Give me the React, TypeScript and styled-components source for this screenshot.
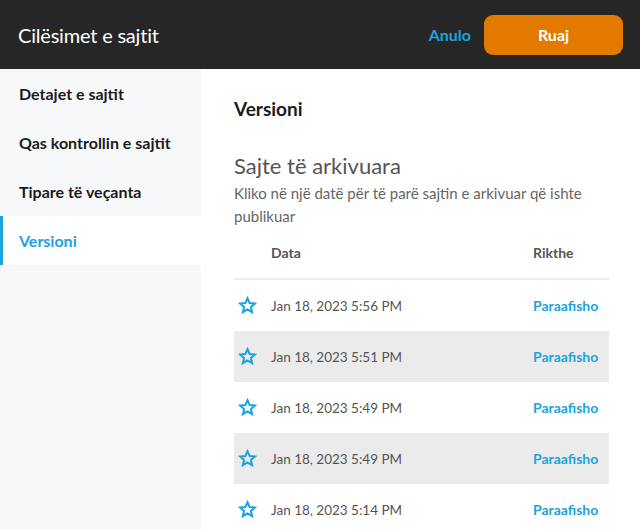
import React from 'react';
import styled, { createGlobalStyle } from 'styled-components';

const GlobalStyle = createGlobalStyle`
  html, body {
    margin: 0;
    padding: 0;
    background: #ffffff;
    font-family: Lato, "Open Sans", sans-serif;
  }
`;

const Page = styled.div`
  width: 640px;
  height: 529px;
  display: flex;
  flex-direction: column;
  overflow: hidden;
`;

const TopBar = styled.header`
  height: 69px;
  flex-shrink: 0;
  background: #262626;
  display: flex;
  align-items: center;
  padding: 0 17px 0 18px;
  box-sizing: border-box;
`;

const Title = styled.h1`
  flex: 1;
  margin: 0;
  color: #ffffff;
  font-size: 20px;
  font-weight: 400;
  letter-spacing: -0.2px;
`;

const CancelLink = styled.a`
  color: #1aa3dc;
  font-size: 16px;
  font-weight: 700;
  margin-right: 13px;
  cursor: pointer;
`;

const SaveButton = styled.button`
  width: 139px;
  height: 40px;
  border: none;
  border-radius: 9px;
  background: #e37a00;
  color: #ffffff;
  font-family: inherit;
  font-size: 16px;
  font-weight: 700;
  cursor: pointer;
`;

const Body = styled.div`
  flex: 1;
  display: flex;
  min-height: 0;
`;

const Sidebar = styled.nav`
  width: 201px;
  flex-shrink: 0;
  background: #f7f8fa;
  display: flex;
  flex-direction: column;
`;

const NavItem = styled.div<{ $active?: boolean }>`
  height: 49px;
  display: flex;
  align-items: center;
  padding-left: ${(p) => (p.$active ? '16px' : '19px')};
  border-left: ${(p) => (p.$active ? '3px solid #1aa3dc' : 'none')};
  background: ${(p) => (p.$active ? '#ffffff' : 'transparent')};
  color: ${(p) => (p.$active ? '#1aa3dc' : '#1b1b1b')};
  font-size: 16px;
  font-weight: 700;
  cursor: pointer;
`;

const Content = styled.main`
  flex: 1;
  padding: 28px 31px 0 33px;
`;

const SectionTitle = styled.h2`
  margin: 0 0 32px;
  font-size: 19px;
  font-weight: 700;
  color: #1b1b1b;
`;

const Subtitle = styled.h3`
  margin: 0 0 3px;
  font-size: 22px;
  font-weight: 400;
  color: #555555;
`;

const Description = styled.p`
  margin: 0 0 5px;
  font-size: 15px;
  line-height: 23px;
  color: #666666;
`;

const Table = styled.div`
  display: flex;
  flex-direction: column;
`;

const HeaderRow = styled.div`
  height: 38px;
  display: flex;
  align-items: center;
  padding: 0 0 7px 37px;
  border-bottom: 2px solid #eeeeee;
  font-size: 14px;
  font-weight: 700;
  color: #555555;
`;

const HeaderCell = styled.span`
  flex: 1;
`;

const ActionCell = styled.span`
  width: 76px;
  flex-shrink: 0;
`;

const Row = styled.div<{ $shaded: boolean }>`
  height: 51px;
  display: flex;
  align-items: center;
  padding: 0 0 0 4px;
  background: ${(p) => (p.$shaded ? '#ebebeb' : 'transparent')};
`;

const StarIcon = styled.svg`
  width: 19px;
  height: 19px;
  margin-right: 14px;
  flex-shrink: 0;
`;

const DateText = styled.span`
  flex: 1;
  font-size: 13.5px;
  color: #555555;
`;

const PreviewLink = styled.a`
  width: 76px;
  flex-shrink: 0;
  font-size: 14px;
  font-weight: 700;
  color: #1aa3dc;
  cursor: pointer;
`;

const navItems = ['Detajet e sajtit', 'Qas kontrollin e sajtit', 'Tipare të veçanta', 'Versioni'];

const versions = [
  'Jan 18, 2023 5:56 PM',
  'Jan 18, 2023 5:51 PM',
  'Jan 18, 2023 5:49 PM',
  'Jan 18, 2023 5:49 PM',
  'Jan 18, 2023 5:14 PM',
];

const Star = () => (
  <StarIcon viewBox="0 0 24 24">
    <path
      d="M12 2.8l2.7 6.1 6.6.6-5 4.4 1.5 6.5L12 17l-5.8 3.4 1.5-6.5-5-4.4 6.6-.6z"
      fill="none"
      stroke="#1aa3dc"
      strokeWidth="2.6"
      strokeLinejoin="miter"
    />
  </StarIcon>
);

const App = () => {
  return (
    <Page>
      <GlobalStyle />
      <TopBar>
        <Title>Cilësimet e sajtit</Title>
        <CancelLink>Anulo</CancelLink>
        <SaveButton>Ruaj</SaveButton>
      </TopBar>
      <Body>
        <Sidebar>
          {navItems.map((item) => (
            <NavItem key={item} $active={item === 'Versioni'}>
              {item}
            </NavItem>
          ))}
        </Sidebar>
        <Content>
          <SectionTitle>Versioni</SectionTitle>
          <Subtitle>Sajte të arkivuara</Subtitle>
          <Description>Kliko në një datë për të parë sajtin e arkivuar që ishte publikuar</Description>
          <Table>
            <HeaderRow>
              <HeaderCell>Data</HeaderCell>
              <ActionCell>Rikthe</ActionCell>
            </HeaderRow>
            {versions.map((v, i) => (
              <Row key={i} $shaded={i % 2 === 1}>
                <Star />
                <DateText>{v}</DateText>
                <PreviewLink>Paraafisho</PreviewLink>
              </Row>
            ))}
          </Table>
        </Content>
      </Body>
    </Page>
  );
};

export default App;
